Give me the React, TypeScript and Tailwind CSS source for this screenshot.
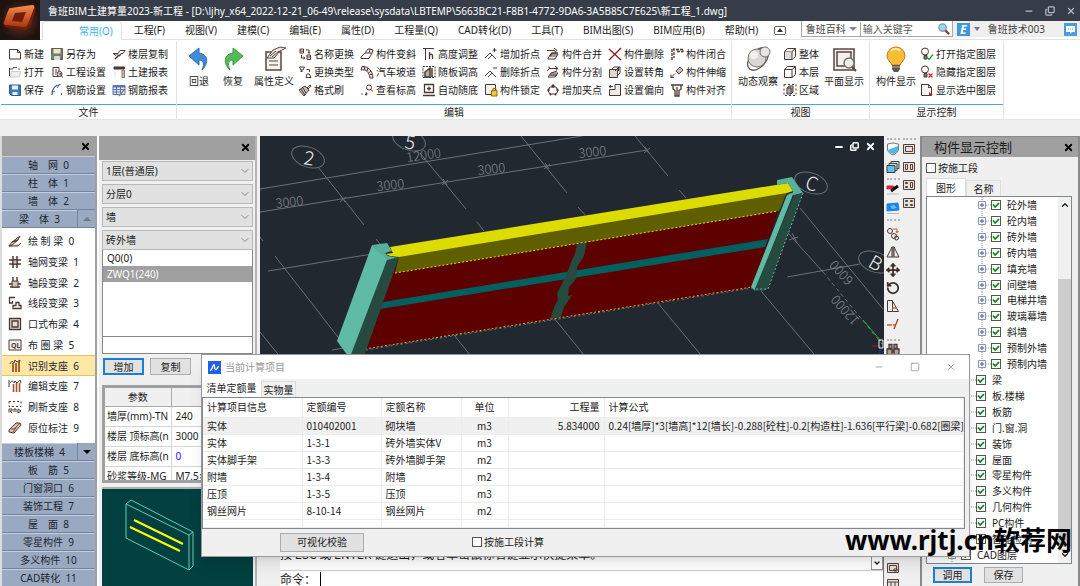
import React, { useState } from 'react';
import { ChevronDown, ChevronUp, Move, RotateCw, X, Minus, Square, Copy } from 'lucide-react';
import clsx from 'clsx';

interface Tool {
  label: string;
  icon: React.ReactNode;
}

interface QuantityRow {
  info: string;
  code: string;
  name: string;
  unit: string;
  amount?: string;
  formula?: string;
}

interface TreeNode {
  label: string;
  level: 1 | 2 | 3;
}

const Glyph = ({ children }: { children: React.ReactNode }) => (
  <svg viewBox="0 0 14 14" className="h-[14px] w-[14px] shrink-0" fill="none" stroke="#4b3833" strokeWidth="1">
    {children}
  </svg>
);

const fileTools: Tool[][] = [
  [
    { label: '新建', icon: <Glyph><path d="M1.5 2.5h8l3 3v6.500h-11z" fill="#fafafa" /><path d="M9.500 2.500v3h3" /></Glyph> },
    { label: '打开', icon: <Glyph><path d="M1.500 3v8" /><path d="M2 4h3V2.500h4M11 3v2" stroke="#6d5a55" /><path d="M3.500 6.500h9L11.500 12h-9z" fill="#eee" stroke="#ccc" /></Glyph> },
    { label: '保存', icon: <Glyph><path d="M1.500 2h11v10.500h-9l-2-2z" fill="#3f78b4" stroke="#2b5f97" /><path d="M4 2.500h6v4H4zM4.500 9h5v3h-5z" fill="#e8f1fa" stroke="none" /></Glyph> },
  ],
  [
    { label: '另存为', icon: <Glyph><path d="M1.500 1.500h11v11h-11z" fill="#777a74" stroke="#5c5f5a" /><path d="M3.500 2h7v4.500h-7z" fill="#eee9b4" stroke="none" /><path d="M4 9h6v4H4z" fill="#d8d8d8" stroke="none" /><path d="M1 7l4 2-4 2z" fill="#4aa53c" stroke="none" /></Glyph> },
    { label: '工程设置', icon: <Glyph><path d="M3 2.500h6v9H3zM5 5h2M5 7h2M5 9h1" /><circle cx="9.500" cy="9" r="2.500" fill="#ddd" /><path d="M10 8l2.500 4.500M9 9h1" /></Glyph> },
    { label: '钢筋设置', icon: <Glyph><path d="M2 12C2 6 5 2 10.500 1.500" stroke="#35598f" strokeWidth="1.200" /><path d="M3 9l2-1M9 2l-2 3" stroke="#777" /><path d="M11 10h1v2h-1z" fill="#35598f" stroke="none" /></Glyph> },
  ],
  [
    { label: '楼层复制', icon: <Glyph><path d="M1 6.500h5l2-3h5l-2 3h-2M1 6.500l3 2 2-2" /><path d="M3 12l4-4M7 9l2-2" strokeWidth="1.500" /></Glyph> },
    { label: '土建报表', icon: <Glyph><path d="M2 2h10.500v2H2z" fill="#4b3833" /><path d="M10 5h2.500v7.500H10z" fill="#c8b8a8" stroke="#8b7a70" /><path d="M3 5v7" stroke="#ddd" /></Glyph> },
    { label: '钢筋报表', icon: <Glyph><path d="M1 2.500h12v9H1z" fill="#e8eef8" stroke="#5b75a8" /><path d="M1 3.500h12" stroke="#5b75a8" strokeWidth="2" /><path d="M1 6.500h12M1 9h8M4.500 3v8M8.500 3v8" stroke="#5b75a8" /><path d="M7 13l5-6" stroke="#8d8177" strokeWidth="1.500" /></Glyph> },
  ],
];

const editTools: Tool[][] = [
  [
    { label: '名称更换', icon: <Glyph><path d="M2 2h3.500v4H2zM2 4h3M9 8h3.500v4.500H9zM9 10h3" /><path d="M8 3h3v3M3.500 8v3h3" /><path d="M10 5l1 1.500L12 5M5.500 10L7 11l-1.500 1" /></Glyph> },
    { label: '更换类型', icon: <Glyph><path d="M1.500 2h5L5 5H3zM9 9h2.500l1.500 3.500H8z" /><path d="M8.500 4.500h3V7" /><path d="M3.500 5.500V7" strokeWidth="2" /></Glyph> },
    { label: '格式刷', icon: <Glyph><path d="M1 7l6-4 4 4-5 6z" fill="#c9bfba" /><path d="M3 6l4 6M5 5l3 5M9 5l3-3 1 1-3 3" /></Glyph> },
  ],
  [
    { label: '构件变斜', icon: <Glyph><path d="M1 10l4-4h7l-3 5.500H1zM5 6l3-4h2l-1 4M10 2l3 1-1 3" /></Glyph> },
    { label: '汽车坡道', icon: <Glyph><path d="M1 5c5-1 8 2 9 8h3C13 6 8 1 2 1.500z" fill="#eee1d8" /><path d="M4 1.500l1 3.500M8 3L7 6M11 6L8.500 8M12.500 9.500H10" /></Glyph> },
    { label: '查看标高', icon: <Glyph><path d="M1.500 11h1M5 11.500h1.500v-2" strokeWidth="1.500" /><circle cx="9" cy="4.500" r="2.500" /><path d="M11 6.500l2 2" stroke="#c98744" strokeWidth="1.500" /></Glyph> },
  ],
  [
    { label: '高度调整', icon: <Glyph><path d="M1 1.500h11M3.500 2v11" /><path d="M7.500 5v7M7.500 8.500c1-2 3-1.500 3 .5v3" strokeWidth="1.300" /></Glyph> },
    { label: '随板调高', icon: <Glyph><path d="M1 1.500h12v11H1z" strokeDasharray="2 1" /><path d="M3 12V7l5-4v9zM10 3v9" fill="#b9ada8" strokeWidth="1.500" /></Glyph> },
    { label: '自动随底', icon: <Glyph><path d="M2.500 1.500h9v8h-9zM1 12.500h12M7 3.500v4M5 5.500h4" strokeWidth="1.300" /></Glyph> },
  ],
  [
    { label: '增加折点', icon: <Glyph><path d="M1 11l5-5 3 3M4 12l4-4 4 4M10.500 1v4M8.500 3h4" /></Glyph> },
    { label: '删除折点', icon: <Glyph><path d="M1 11l5-5 3 3M4 12l4-4 4 4M9 3h4" /></Glyph> },
    { label: '构件锁定', icon: <Glyph><path d="M1.500 1.500h10v10h-10z" fill="#f4f1ef" /><path d="M7.500 7.500h5.500V13H7.500z" fill="#f2c83a" stroke="#8c6a10" /><path d="M9 7V5.500h3V7" stroke="#8c6a10" /></Glyph> },
  ],
  [
    { label: '构件合并', icon: <Glyph><path d="M1 3.500h8M2 11l3-4h7l-3 5H2zM4 9h7M8 1l3 2.500-3 2" /><path d="M4 9l2-3h6" strokeWidth="1.400" /></Glyph> },
    { label: '构件分割', icon: <Glyph><path d="M3 3.500h9M1 6l3-3-2-1M2 12l3-4h7l-3 4zM9 1l3 2.500L10 5M5 8L11 6" /><path d="M4 10h7" strokeWidth="1.400" /></Glyph> },
    { label: '增加夹点', icon: <Glyph><path d="M4 4h6l2 4-2 3H4L2 8z" /><path d="M6 2h2v2H6zM2 6h1v2H2zM11 6h1v2h-1zM4 11h1v1H4zM9 11h1v1H9z" fill="#4b3833" /></Glyph> },
  ],
  [
    { label: '构件删除', icon: <Glyph><path d="M1 2l12 11M13 1L1 13" stroke="#8e1f28" strokeWidth="1.400" /></Glyph> },
    { label: '设置转角', icon: <Glyph><path d="M1.500 4.500h8v8h-8z" fill="#ddd8d4" /><path d="M4 4l2-2h6v6l-2 2M7 6l4-4" /><path d="M10.500 2v4" stroke="#3c3c3c" /></Glyph> },
    { label: '设置偏向', icon: <Glyph><path d="M7 1.500h5.500v11h-11v-6H7z" fill="#eeeae7" /><path d="M1 3.500h4M3 2L1 3.500 3 5" /></Glyph> },
  ],
  [
    { label: '构件闭合', icon: <Glyph><path d="M2 13V2h2v9M6 2.500h7v2H6" strokeDasharray="3 1" strokeWidth="1.300" /></Glyph> },
    { label: '构件伸缩', icon: <Glyph><path d="M6 6l4-4 3 3-4 4z" fill="#cdc4bf" /><path d="M1 12.500l4-4M1 9.500v3h3" /></Glyph> },
    { label: '构件对齐', icon: <Glyph><path d="M1 2h12M3 2v4l2 1.500V13h4V7.500L11 6V2M7 4v9" strokeWidth="1.300" /></Glyph> },
  ],
];

const viewTools: Tool[] = [
  { label: '整体', icon: <Glyph><path d="M1.500 4.500h7.500v8H1.500z" fill="#ddd" /><path d="M1.500 4.500l3-3h8L9 4.500M12.500 1.500v8l-3.500 3" fill="#f5f5f5" /></Glyph> },
  { label: '本层', icon: <Glyph><path d="M1.500 4.500h7.500v8H1.500z" /><path d="M1.500 4.500l3-3h8L9 4.500M12.500 1.500v8l-3.500 3" /></Glyph> },
  { label: '区域', icon: <Glyph><path d="M1 1.500h12v11H1z" strokeDasharray="2 2" /><path d="M4 5h4v6H4zM4 5l2-2h4v6l-2 2" fill="#aaa" /></Glyph> },
];

const layerTools: Tool[] = [
  { label: '打开指定图层', icon: <Glyph><circle cx="5" cy="4.500" r="3.500" fill="#fafafa" /><path d="M4 8.500h3v3.500H4z" fill="#777" /><path d="M7 10.500l2 2 4-5" stroke="#27a33a" strokeWidth="1.400" /></Glyph> },
  { label: '隐藏指定图层', icon: <Glyph><circle cx="5" cy="4.500" r="3.500" fill="#fafafa" /><path d="M4 8.500h3v3.500H4z" fill="#777" /><path d="M8.500 8.500l4 4M12.500 8.500l-4 4" stroke="#c62c2c" strokeWidth="1.300" /></Glyph> },
  { label: '显示选中图层', icon: <Glyph><path d="M1.500 1.500h7l3 3v8h-10z" fill="#f6f6f6" /><path d="M8.500 1.500v3h3" /><path d="M9 9l4 3-4 1z" fill="#b23" stroke="none" /></Glyph> },
];

const menus = ['工程(F)', '视图(V)', '建模(C)', '编辑(E)', '属性(D)', '工程量(Q)', 'CAD转化(D)', '工具(T)', 'BIM出图(S)', 'BIM应用(B)', '帮助(H)'];

const beamTools: Tool[] = [
  { label: '绘 制 梁  0', icon: <Glyph><path d="M1 12l3-4 8-6-2 4-6 5zM1 12h9l3-3M4 8l5-1M6 7l4-1" fill="#cfc5bd" /></Glyph> },
  { label: '轴网变梁  1', icon: <Glyph><path d="M1 5h12M1 9h12M5 1v12M9 1v12" strokeWidth="1.500" /><path d="M5 5h4v4H5z" fill="#cfc5bd" /></Glyph> },
  { label: '轴段变梁  2', icon: <Glyph><path d="M1 8h12M5 1v5M9 1v5M2 11h10" strokeWidth="1.400" /><path d="M4 5h6v6H4z" fill="#cfc5bd" /></Glyph> },
  { label: '线段变梁  3', icon: <Glyph><path d="M1 1.500h6M1.500 1v6h3V5M5 12.500h8v-3h-2v-3H8v3H5z" strokeWidth="1.300" /></Glyph> },
  { label: '口式布梁  4', icon: <Glyph><path d="M1.500 1.500h11v11h-11zM4 4h6v6H4z" fill="#e2dbd6" strokeWidth="1.300" /></Glyph> },
  { label: '布 圈 梁  5', icon: <Glyph><path d="M1 2h12v10H1z" fill="#f4f0ed" /><text x="3" y="10" fontSize="7" fontWeight="700" fill="#4b3833" stroke="none">QL</text></Glyph> },
  { label: '识别支座  6', icon: <Glyph><path d="M2 5c1-3 3-3 4-1l1-3 2 2 3-2-1 4" /><path d="M5 4v9M8 4v9M11 2v11" stroke="#a4532c" strokeWidth="1.800" /></Glyph> },
  { label: '编辑支座  7', icon: <Glyph><path d="M1 1v7M2 4c2-3 3-2 4 0l1-2 2 2 3-3 1 3" /><path d="M5.500 5v8M8.500 4v9M11.500 4v9" stroke="#a4532c" strokeWidth="1.600" /></Glyph> },
  { label: '刷新支座  8', icon: <Glyph><path d="M1 1.500h12v5H1z" strokeDasharray="2 2" /><path d="M1 12.500V9h3v2H2l2 2M6 12V9h2v3M10 9v4l3-2z" /></Glyph> },
  { label: '原位标注  9', icon: <Glyph><path d="M1 9l7-7h4l1 2-7 8-5-1z" fill="#d9c7ba" /><path d="M3 8h3l6-6M5 11L9 5" stroke="#8b4a2b" /></Glyph> },
];

const sideCategories = ['板　筋  5', '门窗洞口  6', '装饰工程  7', '屋　面  8', '零星构件  9', '多义构件  10', 'CAD转化  11'];

const quantityRows: QuantityRow[] = [
  { info: '实体', code: '010402001', name: '砌块墙', unit: 'm3', amount: '5.834000', formula: '0.24[墙厚]*3[墙高]*12[墙长]-0.288[砼柱]-0.2[构造柱]-1.636[平行梁]-0.682[圈梁]' },
  { info: '实体', code: '1-3-1', name: '砖外墙实体V', unit: 'm3' },
  { info: '实体脚手架', code: '1-3-3', name: '砖外墙脚手架', unit: 'm2' },
  { info: '附墙', code: '1-3-4', name: '附墙', unit: 'm2' },
  { info: '压顶', code: '1-3-5', name: '压顶', unit: 'm3' },
  { info: '钢丝网片', code: '8-10-14', name: '钢丝网片', unit: 'm2' },
];

const treeNodes: TreeNode[] = [
  ...['砼外墙', '砼内墙', '砖外墙', '砖内墙', '填充墙', '间壁墙', '电梯井墙', '玻璃幕墙', '斜墙', '预制外墙', '预制内墙'].map(
    (label): TreeNode => ({ label, level: 3 })
  ),
  ...['梁', '板.楼梯', '板筋', '门.窗.洞', '装饰', '屋面', '零星构件', '多义构件', '几何构件', 'PC构件', '智能检测'].map(
    (label): TreeNode => ({ label, level: 2 })
  ),
  { label: 'CAD图层', level: 1 },
];

const properties = [
  ['墙厚(mm)-TN', '240'],
  ['楼层 顶标高(n', '3000'],
  ['楼层 底标高(n', '0'],
  ['砂浆等级-MG', 'M7.5≈'],
];

const ToolColumn = ({ tools }: { tools: Tool[] }) => (
  <div className="flex flex-col">
    {tools.map((tool) => (
      <button key={tool.label} className="flex h-[18px] items-center gap-[2px] whitespace-nowrap">
        {tool.icon}
        {tool.label}
      </button>
    ))}
  </div>
);

const BigTool = ({ label, children }: { label: string; children: React.ReactNode }) => (
  <button className="flex flex-col items-center gap-[2px] pt-px whitespace-nowrap">
    <svg viewBox="0 0 26 26" className="h-[26px] w-[26px]" fill="none">
      {children}
    </svg>
    <span className="leading-[14px]">{label}</span>
  </button>
);

const RibbonGroup = ({ title, className, children }: { title: string; className?: string; children: React.ReactNode }) => (
  <section className={clsx('flex flex-col border-r border-[#e2e2e2]', className)}>
    <div className="flex h-16 items-start border-b border-[#4ba3f5] pt-1">{children}</div>
    <h2 className="text-center leading-[14px]">{title}</h2>
  </section>
);

const TickBox = ({ label, checked = false, className }: { label: string; checked?: boolean; className?: string }) => (
  <label className={clsx('flex items-center whitespace-nowrap', className)}>
    <span className="relative h-[10px] w-[10px] shrink-0">
      <input type="checkbox" defaultChecked={checked} className="peer block h-[10px] w-[10px] appearance-none border border-[#555] bg-white" />
      <svg viewBox="0 0 10 10" className="pointer-events-none absolute inset-0 hidden peer-checked:block" fill="none" stroke="#0b8a1a" strokeWidth="1.800">
        <path d="M2 4.500l2.200 2.500L8 3" />
      </svg>
    </span>
    {label}
  </label>
);

const DropDown = ({ label, value }: { label: string; value: string }) => (
  <div className="relative">
    <select aria-label={label} className="block h-5 w-full appearance-none border border-[#b9b9b9] bg-[#e1e1e1] pl-[3px]">
      <option>{value}</option>
    </select>
    <ChevronDown className="pointer-events-none absolute top-1 right-[2px] h-3 w-3 text-[#666]" strokeWidth={1.5} />
  </div>
);

const PanelHeader = ({ title }: { title?: string }) => (
  <header className="flex h-5 shrink-0 items-center justify-between bg-[#a0a0a0] pr-1 pl-3">
    <h2 className="text-[13px]">{title}</h2>
    <button aria-label="关闭面板">
      <X className="h-[11px] w-[11px] text-black" strokeWidth={4} />
    </button>
  </header>
);

const AppLogo = () => (
  <svg viewBox="0 0 40 40" className="h-10 w-10 shrink-0">
    <defs>
      <radialGradient id="ember">
        <stop offset="0" stopColor="#6b3520" />
        <stop offset="1" stopColor="#20120f" />
      </radialGradient>
      <linearGradient id="metal" x2="0" y2="1">
        <stop offset="0" stopColor="#f58a50" />
        <stop offset="1" stopColor="#a8360f" />
      </linearGradient>
    </defs>
    <path d="M0 0h40v40H0z" fill="url(#ember)" />
    <path d="M12 9l20-4 4 3-5 17-5 5-21-3-1-3z" fill="#711d08" />
    <path d="M11 8l21-3c2 0 3 1 2 3l-6 16c-1 2-2 3-4 3L6 25c-2 0-3-1-2-3l4-11c1-2 1-3 3-3zm4 5l-3 8 10 1 4-10z" fill="url(#metal)" fillRule="evenodd" />
  </svg>
);

const TitleBar = () => (
  <header className="flex bg-white">
    <AppLogo />
    <div className="min-w-0 flex-1">
      <div className="flex h-[21px] items-center justify-between bg-[#363d48] pr-1 pl-2 text-white">
        <h1 className="truncate">鲁班BIM土建算量2023-新工程 - [D:\ljhy_x64_2022-12-21_06-49\release\sysdata\LBTEMP\5663BC21-F8B1-4772-9DA6-3A5B85C7E625\新工程_1.dwg]</h1>
        <div className="flex items-end gap-[11px] text-[#b5b9c0]">
          <button aria-label="最小化"><Minus className="h-[10px] w-[10px]" strokeWidth={3} /></button>
          <button aria-label="还原"><Copy className="h-[10px] w-[10px] -scale-y-100" strokeWidth={3} /></button>
          <button aria-label="关闭"><X className="h-[10px] w-[10px]" strokeWidth={3} /></button>
        </div>
      </div>
      <div className="flex h-[19px] justify-between border-b border-[#e2e2e2]">
        <nav className="ml-[2px] flex items-center gap-5 whitespace-nowrap">
          <button className="-mb-px h-[19px] rounded-t-sm border border-b-0 border-[#dedede] bg-white pr-2 pl-9 text-[#42b4ee]">常用(O)</button>
          <div className="-ml-2 flex items-center gap-5">
            {menus.map((menu) => (
              <button key={menu} className="h-[19px]">{menu}</button>
            ))}
          </div>
          <button aria-label="收起功能区" className="-ml-1 grid h-[9px] w-3 place-items-center rounded-xs border border-[#666]">
            <svg viewBox="0 0 6 4" className="h-1 w-[6px]"><path d="M3 0l3 4H0z" fill="#333" /></svg>
          </button>
        </nav>
        <div className="flex h-4 text-[#444]">
          <div className="flex items-center border border-t-0 border-[#a8a8a8] bg-white pl-1">
            <select aria-label="搜索范围" className="appearance-none"><option>鲁班百科</option></select>
            <svg viewBox="0 0 12 12" className="mx-px h-3 w-3"><path d="M2 4h8l-4 4z" fill="#888" /></svg>
            <input aria-label="搜索关键字" placeholder="输入关键字" className="h-[14px] w-[77px] border-l border-[#aaa] pl-[2px] placeholder:text-[#555]" />
            <svg viewBox="0 0 14 14" className="mr-[2px] h-[13px] w-[13px]" fill="none">
              <circle cx="6" cy="6" r="4" fill="#9fd6ef" stroke="#8ba0ac" strokeWidth="1.500" />
              <path d="M9 9l4 4" stroke="#7a4a3a" strokeWidth="2.500" />
            </svg>
          </div>
          <div className="flex items-center gap-[3px] bg-[#efefef] pr-[3px] pl-1">
            <svg viewBox="0 0 13 13" className="h-[13px] w-[13px]">
              <path d="M0 0h13v13H0z" fill="#3f97de" />
              <text x="3" y="11" fontSize="12" fontWeight="700" fontStyle="italic" fill="#fff">E</text>
            </svg>
            <svg viewBox="0 0 8 8" className="h-2 w-2"><path d="M1 2h6L4 6z" fill="#777" /></svg>
            <span className="mr-4 ml-1">鲁班技术003</span>
            <svg viewBox="0 0 13 13" className="h-[13px] w-[13px]"><path d="M0 0h13v13H0z" fill="#4b9ddd" /><path d="M2 3h9v6H8l-2 2V9H2z" fill="#fff" /><path d="M4 6h1M6 6h1M8 6h1" stroke="#4b9ddd" /></svg>
          </div>
        </div>
      </div>
    </div>
  </header>
);

const Ribbon = () => (
  <div className="flex border-b border-[#e5e5e5] bg-white pt-px pl-px">
    <RibbonGroup title="文件" className="w-[176px]">
      <div className="flex gap-[6px] pl-[7px]">
        {fileTools.map((tools) => (
          <ToolColumn key={tools[0].label} tools={tools} />
        ))}
      </div>
    </RibbonGroup>
    <RibbonGroup title="编辑" className="w-[555px]">
      <div className="flex gap-2 pr-1 pl-[9px]">
        <BigTool label="回退">
          <path d="M3 10l10-8v5c8 1 11 9 3 17 3-7 1-10-3-10v5z" fill="#3f8bd6" stroke="#2e6fb4" />
        </BigTool>
        <BigTool label="恢复">
          <path d="M23 10L13 2v5C5 8 2 16 10 24c-3-7-1-10 3-10v5z" fill="#55bb58" stroke="#3a9b3f" />
        </BigTool>
        <BigTool label="属性定义">
          <path d="M5 6h15v18H5z" fill="#f5f2f0" stroke="#5a4640" strokeWidth="1.500" />
          <path d="M8 15h9M8 19h9M6 12l6-8 7-3 6 1-6 3-6 7z" stroke="#5a4640" fill="#eee5df" />
          <path d="M9 10l6-5M11 11l7-6" stroke="#5a4640" />
        </BigTool>
      </div>
      <div className="flex gap-[6px]">
        {editTools.map((tools) => (
          <ToolColumn key={tools[0].label} tools={tools} />
        ))}
      </div>
    </RibbonGroup>
    <RibbonGroup title="视图" className="w-[138px]">
      <div className="flex gap-[5px] pl-[6px]">
        <BigTool label="动态观察">
          <ellipse cx="13" cy="13" rx="13" ry="8" transform="rotate(-50 13 13)" stroke="#5f5551" strokeWidth="1.300" />
          <circle cx="12" cy="12" r="9" fill="#d6d6d4" stroke="#77706c" />
          <circle cx="9" cy="9" r="4" fill="#f1f1f0" />
          <circle cx="20" cy="6" r="5" fill="#e6e6e5" stroke="#77706c" />
        </BigTool>
        <ToolColumn tools={viewTools} />
        <BigTool label="平面显示">
          <path d="M3 3h20v21H3zM6 6h14v14H6z" fill="#f4f1ef" stroke="#594640" strokeWidth="1.500" />
          <circle cx="18" cy="17" r="5" fill="#eee" stroke="#7b706b" strokeWidth="1.500" />
          <path d="M21 21l4 4" stroke="#594640" strokeWidth="2" />
        </BigTool>
      </div>
    </RibbonGroup>
    <RibbonGroup title="显示控制" className="w-[134px]">
      <div className="flex gap-1 pl-[6px]">
        <BigTool label="构件显示">
          <path d="M13 1a9 9 0 0 0-9 9c0 4 4 6 5 9h8c1-3 5-5 5-9a9 9 0 0 0-9-9z" fill="#f9bd35" stroke="#b77e19" />
          <path d="M8 5c2-3 7-3 9 0" stroke="#fde7a4" strokeWidth="2" />
          <path d="M9 19h8v4l-2 3h-4l-2-3z" fill="#60504a" />
          <path d="M9 21h8" stroke="#bbb" />
        </BigTool>
        <ToolColumn tools={layerTools} />
      </div>
    </RibbonGroup>
  </div>
);

const categoryStyle = 'h-[18px] w-full border-t border-b border-t-[#c3cede] border-b-[#74839c] bg-[#9aa9c2] leading-4 whitespace-pre';

const SideMenu = () => {
  const [active, setActive] = useState(6);

  return (
    <aside className="flex w-[97px] shrink-0 flex-col border-x-2 border-x-[#dcdcdc] border-r-[#a0a0a0] bg-white">
      <PanelHeader />
      <nav className="flex flex-col text-[#20242c]">
        <button className={categoryStyle}>{'轴　网  0'}</button>
        <button className={categoryStyle}>{'柱　体  1'}</button>
        <button className={categoryStyle}>{'墙　体  2'}</button>
        <div className="flex">
          <button className={categoryStyle}>{'梁　体  3'}</button>
          <button aria-label="收起梁体" className="grid w-[18px] shrink-0 place-items-center border-b border-l border-[#74839c] bg-[#9aa9c2]">
            <svg viewBox="0 0 8 6" className="h-[6px] w-2"><path d="M4 1l4 4H0z" fill="#77777c" /></svg>
          </button>
        </div>
        <ul className="grid h-[215px] auto-rows-fr pt-[3px] pb-[5px]">
          {beamTools.map((tool, i) => (
            <li key={tool.label} className="flex">
              <button
                onClick={() => setActive(i)}
                className={clsx('flex w-full items-center gap-[6px] border-y pl-[6px] whitespace-pre', i === active ? 'border-[#e5c365] bg-[#ffe8a6]' : 'border-transparent')}
              >
                {tool.icon}
                {tool.label}
              </button>
            </li>
          ))}
        </ul>
        <div className="flex">
          <button className={categoryStyle}>楼板楼梯  4</button>
          <button aria-label="展开楼板楼梯" className="grid w-[18px] shrink-0 place-items-center border-b border-l border-[#74839c] bg-[#9aa9c2]">
            <svg viewBox="0 0 8 6" className="h-[6px] w-2"><path d="M4 5L0 1h8z" fill="#000" /></svg>
          </button>
        </div>
        {sideCategories.map((name) => (
          <button key={name} className={categoryStyle}>{name}</button>
        ))}
      </nav>
    </aside>
  );
};

const ComponentPanel = () => (
  <aside className="flex w-[160px] shrink-0 flex-col border-r-2 border-l-2 border-r-[#b4b4b4] border-l-[#fafafa] bg-[#f0f0f0]">
    <div className="bg-[#a0a0a0] pt-px pb-[3px]"><PanelHeader /></div>
    <div className="flex flex-1 flex-col pr-[2px] pl-[3px]">
      <div className="flex flex-col gap-[3px] pt-px">
        <DropDown label="楼层" value="1层(普通层)" />
        <DropDown label="分层" value="分层0" />
        <DropDown label="构件大类" value="墙" />
        <DropDown label="构件小类" value="砖外墙" />
      </div>
      <div className="-mt-px border border-[#888] bg-white">
        <ul className="h-[86px]">
          <li><button className="block h-4 w-full pl-1 text-left leading-4">Q0(0)</button></li>
          <li><button className="block h-4 w-full bg-[#a0a0a0] pl-1 text-left leading-4 text-white">ZWQ1(240)</button></li>
        </ul>
        <input aria-label="构件名称" className="block h-[17px] w-full border-t border-[#888]" />
      </div>
      <div className="flex gap-[6px] pt-1 pb-[6px] pl-px">
        <button className="h-[17px] w-[41px] border-2 border-[#1b7fd4] bg-[#e1e1e1] leading-3">增加</button>
        <button className="h-[17px] w-[41px] border border-[#adadad] bg-[#e1e1e1] leading-3">复制</button>
      </div>
      <div className="mt-1 h-[98px] overflow-hidden border-[3px] border-[#a0a0a0] bg-white">
        <table className="w-full table-fixed border-collapse">
          <thead>
            <tr className="h-[18px] bg-[#f0f0f0]">
              <th className="w-[66px] border-r border-b border-[#aaa] font-normal">参数</th>
              <th className="border-b border-[#aaa] font-normal">值</th>
            </tr>
          </thead>
          <tbody>
            {properties.map(([name, value]) => (
              <tr key={name} className="h-5">
                <td className="overflow-hidden border-r border-b border-[#d5d5d5] pl-[2px] whitespace-nowrap">{name}</td>
                <td className={clsx('border-b border-[#d5d5d5] pl-1', value === '0' && 'text-[#2222ff]')}>{value}</td>
              </tr>
            ))}
          </tbody>
        </table>
      </div>
      <div className="mt-1 flex-1 border-t-2 border-[#b0b0b0]">
        <svg viewBox="102 487 151 98" preserveAspectRatio="xMinYMin slice" className="h-[98px] w-full bg-[#004040]" fill="none">
          <g stroke="#64cdb4">
            <path d="M126 502l63 31v35l-63-32zM126 502l5-4 62 32v34l-4 4M189 533l4-3" />
          </g>
          <path d="M134 518l49 24M130 525l50 24" stroke="#ff0" strokeWidth="2" />
        </svg>
      </div>
    </div>
  </aside>
);

const ModelView = () => (
  <div className="relative min-h-0 flex-1 bg-[#212830]">
    <svg viewBox="260 136 624 404" preserveAspectRatio="xMinYMin slice" className="h-full w-full font-['Noto_Sans_CJK_SC',sans-serif] font-light" fill="none">
      <g stroke="#6c7075" strokeWidth="1">
        <path d="M260 189L582 136M260 212l387-62" />
        <path d="M318 167l46 58M420 153l46 56M521 136l46 57M635 136l33 40" />
        <path d="M477 222l7 9M376 239l8 10M578 207l7 8M679 190l7 8M260 237l3 4" />
        <path d="M275 256l80 103M268 271l104-17M260 332l22 27M332 350l18-3" />
        <path d="M454 335l20 25M554 318l34 42M657 302l48 58M761 291l58 69" />
        <path d="M800 208l83 101M788 233l35 39M787 277l73-13" />
        <path d="M823 272l59 72" strokeDasharray="4 3" />
        <path d="M792 233l5 10M789 240l9-3M340 202l6-5M341 196l4 6M442 185l6-5M443 179l4 6M544 169l6-5M545 163l4 6M644 153l6-5M645 147l4 6" />
        <ellipse cx="308" cy="157" rx="17" ry="10" transform="rotate(20 308 157)" />
        <ellipse cx="409" cy="140" rx="17" ry="10" transform="rotate(20 409 140)" />
        <ellipse cx="811" cy="183" rx="17" ry="10" transform="rotate(20 811 183)" />
        <ellipse cx="875" cy="262" rx="17" ry="10" transform="rotate(20 875 262)" />
      </g>
      <g fill="#85898e" fontSize="13">
        <text x="276" y="208" transform="rotate(-6 276 208)">3000</text>
        <text x="377" y="191" transform="rotate(-6 377 191)">3000</text>
        <text x="478" y="175" transform="rotate(-6 478 175)">3000</text>
        <text x="579" y="158" transform="rotate(-6 579 158)">3000</text>
        <text x="407" y="162" transform="rotate(-8 407 162)">12000</text>
        <text x="854" y="280" transform="rotate(228 854 280)">6000</text>
        <text x="860" y="320" transform="rotate(228 860 320)">12000</text>
      </g>
      <g fill="#eee" fontSize="19">
        <text x="303" y="164" transform="rotate(10 303 164)">2</text>
        <text x="404" y="148" transform="rotate(10 404 148)">5</text>
        <text x="804" y="188" transform="rotate(20 804 188)">C</text>
        <text x="867" y="266" transform="rotate(30 867 266)">B</text>
      </g>
      <path d="M399 256L787 192 778 212 752 288 365 349 390 270z" fill="#5c0000" />
      <path d="M399 256L787 192 779 211 395 273z" fill="#5f5f00" />
      <path d="M383 302L768 239 765 247 380 309z" fill="#005f5f" />
      <path d="M577 244l10-2-3 14-7 11-1 12-7 8-1 9 4-1-8 12-3 10-11 2 5-14 3-5-1-7 7-13 5-12 2-6 4-8z" fill="#264a40" />
      <path d="M390 247L788 183l5 8-6 2L399 257l-9-1-4-2 7-1z" fill="#dcdc00" />
      <path d="M395 273L778 211" stroke="#dcdc00" strokeDasharray="2 2" />
      <path d="M365 349L752 287" stroke="#dca02a" strokeDasharray="2 2" />
      <path d="M366 350L752 288" stroke="#3f8a80" strokeDasharray="2 3" />
      <path d="M777 180l15-3 11 16-10 2 0-4-5-8-11 2z" fill="#58b09b" />
      <path d="M787 195l7-3-39 99-4-4z" fill="#5fbba5" />
      <path d="M788 194l15-2-9 3z" fill="#58b09b" />
      <path d="M794 195l9-2-35 95-4 3h-10z" fill="#264a40" />
      <path d="M803 193l-35 96h-14" stroke="#5fbba5" strokeDasharray="2 2" />
      <path d="M372 245l15-2 5 8-7 2 3 3 11 2-12 3z" fill="#58b09b" />
      <path d="M372 245l15 15-31 107-19-26z" fill="#5fbba5" />
      <path d="M387 260l12-3-37 105-12-5z" fill="#264a40" />
      <path d="M863 320l18 21" stroke="#0fbf1f" />
      <path d="M872 346h8" stroke="#b01818" />
      <path d="M880 346v10" stroke="#2222ee" />
      <path d="M879 340h4v8h-4z" stroke="#eee" />
    </svg>
    <div className="absolute top-[5px] right-2 flex items-center gap-[6px] text-white">
      <button aria-label="最小化视图"><Minus className="h-[10px] w-[10px]" strokeWidth={5} /></button>
      <button aria-label="还原视图"><Copy className="h-[9px] w-[9px] -scale-y-100" strokeWidth={4} /></button>
      <button aria-label="关闭视图"><X className="h-[11px] w-[11px]" strokeWidth={4} /></button>
    </div>
  </div>
);

const CommandLine = () => (
  <div className="flex h-[46px] shrink-0 border-r border-[#777] bg-white font-['Noto_Sans_CJK_SC',sans-serif] text-[12px]">
    <div className="w-5 shrink-0 bg-[#f0f0f0]" />
    <div className="min-w-0 flex-1">
      <div className="flex h-[31px] items-end justify-between border-b border-[#ccc]">
        <p className="mb-2 leading-4">按 ESC 或 ENTER 键退出，或者单击鼠标右键显示快捷菜单。</p>
        <button aria-label="向下滚动" className="grid h-[14px] w-3 place-items-center border border-[#999] bg-white">
          <ChevronDown className="h-2 w-2" strokeWidth={4} />
        </button>
      </div>
      <label className="flex items-center pt-px">
        命令：
        <input className="ml-1 h-[14px] flex-1 border-l border-black" />
      </label>
    </div>
  </div>
);

const Grip = () => <div className="h-1 w-[13px] border-t-2 border-dotted border-[#b5b5b5]" />;

const PaneIcon = ({ d }: { d: string }) => (
  <svg viewBox="0 0 14 14" className="h-[14px] w-[14px]" fill="#e7dfda" stroke="#55403a" strokeWidth="1">
    <path d="M1.500 2.500h11v9h-11z" />
    <path d={d} />
  </svg>
);

const modifyIcons: Tool[] = [
  { label: '复制对象', icon: <Glyph><circle cx="4" cy="4" r="2.500" /><circle cx="8" cy="9" r="2.500" /><circle cx="10.500" cy="11" r="2" /><path d="M7 2h4v3M10 4l1 2 1.500-2" stroke="#c4602a" /></Glyph> },
  { label: '镜像', icon: <Glyph><path d="M6 2v10H1zM8 2v10h5zM7 1v12" fill="#eee" /></Glyph> },
  { label: '移动', icon: <Move className="h-[14px] w-[14px] text-[#3f2a24]" strokeWidth={3} /> },
  { label: '旋转', icon: <RotateCw className="h-[14px] w-[14px] -scale-x-100 text-[#3f2a24]" strokeWidth={3} /> },
  { label: '拉伸', icon: <Glyph><path d="M1.500 1.500v11h5v-11zM7 3l5.500 9.500H7" /><path d="M6 9h4" stroke="#c4602a" strokeWidth="1.500" /></Glyph> },
  { label: '延伸', icon: <Glyph><path d="M1 8h5M7 8h2" stroke="#c4602a" strokeWidth="1.300" /><path d="M8 12l4-10" stroke="#a0402a" strokeWidth="1.300" /></Glyph> },
];

const SideToolbars = () => (
  <div className="flex w-[36px] shrink-0 items-start gap-[2px] bg-[#f0f0f0] pt-[2px] pl-[2px] text-[#4b3833]">
    <div className="flex flex-col items-center">
      <Grip />
      <div className="flex flex-col items-center gap-1">
        <button aria-label="着色"><Glyph><path d="M1.500 2l5.500-1 5.500 1v5c0 3-3 5-5.500 6-2.500-1-5.500-3-5.500-6z" fill="#f6f6f6" stroke="#777" /><path d="M2 8l10-4v4c-1 2-3 4-5 4-3-1-4-2-5-4z" fill="#4ab9e8" stroke="none" /></Glyph></button>
        <button aria-label="图层"><Glyph><path d="M5 1.500h8v7H5z" fill="#bfe6f5" /><path d="M3 3.500h8v7H3z" fill="#bfe6f5" /><path d="M1 5.500h8v7H1z" fill="#5cc4ea" /></Glyph></button>
      </div>
      <div className="mt-1"><Grip /></div>
      <div className="flex flex-col items-center gap-[5px]">
        <button aria-label="画笔"><Glyph><path d="M1 4h6l3 2-9 1z" fill="#d9202c" stroke="#d9202c" /><path d="M12 4l-7 5" stroke="#111" strokeWidth="3" /><path d="M1 12h12" stroke="#bbb" /></Glyph></button>
        <button aria-label="三维"><Glyph><path d="M1 3l11-1 1 7-12 1z" fill="#1d83e6" stroke="#1d83e6" /><path d="M4 5l4-1 3 3-5 1z" fill="#5fc2ff" stroke="none" /><path d="M1 12.500h12" stroke="#bbb" /></Glyph></button>
      </div>
      <div className="mt-1"><Grip /></div>
      <div className="flex flex-col items-center gap-1 pt-1">
        {modifyIcons.map((tool) => (
          <button key={tool.label} aria-label={tool.label}>{tool.icon}</button>
        ))}
      </div>
      <div className="mt-2"><Grip /></div>
      <button aria-label="查找"><Glyph><path d="M3 1.500h3v4H3zM8 1.500h3v4H8zM1 6h5v7H1zM8 6h5v7H8zM6 7h2v2H6z" fill="#a99f9b" strokeWidth="1.300" /></Glyph></button>
      <div className="mt-[204px] flex flex-col gap-[2px]">
        <button aria-label="视口"><PaneIcon d="M3.500 4.500h7v5h-7zM8 8h3v2H8z" /></button>
        <button aria-label="表格"><PaneIcon d="M1 5h12M5 5v7M9 5v7" /></button>
      </div>
    </div>
    <div className="flex flex-col items-center">
      <Grip />
      <div className="flex flex-col gap-1">
        <button aria-label="单视口"><PaneIcon d="M3.500 4.500h7v5h-7z" /></button>
        <button aria-label="双视口"><PaneIcon d="M3.500 4.500h2v5h-2zM8.500 4.500h2v5h-2z" /></button>
        <button aria-label="三视口"><PaneIcon d="M3.500 4.500h2v1h-2zM3.500 8.500h2v1h-2zM8.500 4.500h2v5h-2z" /></button>
        <button aria-label="四视口"><PaneIcon d="M3.500 4.500h2v1h-2zM8.500 4.500h2v1h-2zM3.500 8.500h2v1h-2zM8.500 8.500h2v1h-2z" /></button>
      </div>
    </div>
  </div>
);

const treeIndent = {
  1: 'pl-[21px]',
  2: 'pl-9',
  3: 'pl-[51px]',
};

const DisplayPanel = () => (
  <aside className="flex w-[160px] shrink-0 flex-col border-x-2 border-t border-[#8a8a8a] bg-[#f0f0f0]">
    <PanelHeader title="构件显示控制" />
    <TickBox label="按施工段" className="h-[22px] gap-[2px] pl-1" />
    <div className="flex h-[18px] items-end pl-1">
      <button className="h-[18px] w-10 border border-b-0 border-[#ddd] bg-white">图形</button>
      <button className="h-4 w-[35px] border border-b-0 border-[#ddd]">名称</button>
    </div>
    <div className="mr-[6px] ml-1 flex border border-[#828790] bg-white">
      <ul className="grid h-[366px] min-w-0 flex-1 auto-rows-fr">
        {treeNodes.map((node) => (
          <li key={node.label} className={clsx('flex items-center', treeIndent[node.level])}>
            <svg viewBox="0 0 13 16" className="h-4 w-[13px] shrink-0" fill="none">
              <path d="M4 0v16M8 8h5" stroke="#999" strokeDasharray="1 1" />
              {node.level !== 2 && (
                <>
                  <path d="M.5 4.500h7v7h-7z" fill="#f4f4f4" stroke="#8e9aa8" />
                  <path d="M2 8h4M4 6v4" stroke="#3c5ca0" />
                </>
              )}
            </svg>
            <TickBox label={node.label} checked className="gap-[6px]" />
          </li>
        ))}
      </ul>
      <div className="flex w-[13px] flex-col items-center justify-between bg-[#f0f0f0]">
        <button aria-label="向上滚动" className="py-[3px]"><ChevronUp className="h-[10px] w-[10px]" strokeWidth={3} /></button>
        <div className="mt-[66px] w-full flex-1 bg-[#cdcdcd]" />
        <button aria-label="滚动到下方" className="py-[3px]"><ChevronDown className="h-[10px] w-[10px]" strokeWidth={3} /></button>
      </div>
    </div>
    <div className="flex gap-3 py-[3px] pl-[11px]">
      <button className="h-4 w-[39px] border-2 border-[#1b7fd4] bg-[#e1e1e1] leading-3">调用</button>
      <button className="h-4 w-[39px] border border-[#adadad] bg-[#e1e1e1] leading-3">保存</button>
    </div>
  </aside>
);

const cell = 'border-r border-b border-[#ececec] pl-1 font-normal whitespace-nowrap';

const QuantityDialog = () => (
  <div role="dialog" aria-label="当前计算项目" className="absolute top-[218px] right-[110px] left-[201px] border border-[#999] bg-[#f0f0f0] shadow-lg">
    <header className="flex h-6 items-center bg-white pr-[13px] pl-[6px] text-[#999]">
      <svg viewBox="0 0 13 13" className="mr-1 h-[13px] w-[13px]" fill="none">
        <path d="M0 0h13v13H0z" fill="#1f62e8" />
        <path d="M2 9.500c2 0 3-6 4-6s0 6 2 5 1-3 3-3" stroke="#fff" strokeWidth="1.300" />
      </svg>
      <h2 className="flex-1">当前计算项目</h2>
      <div className="flex gap-[26px]">
        <button aria-label="最小化窗口"><Minus className="h-[10px] w-[10px]" /></button>
        <button aria-label="最大化窗口"><Square className="h-[10px] w-[10px]" /></button>
        <button aria-label="关闭窗口"><X className="h-[10px] w-[10px]" /></button>
      </div>
    </header>
    <div className="flex h-[18px] items-end">
      <button className="h-[18px] w-[59px] bg-white">清单定额量</button>
      <button className="h-4 w-[35px] border border-b-0 border-[#ddd]">实物量</button>
    </div>
    <div className="mr-1 border border-[#828790] bg-white">
      <table className="w-full table-fixed border-collapse text-left font-['Noto_Sans_CJK_SC',sans-serif]">
        <thead>
          <tr className="h-[19px]">
            <th className={clsx(cell, 'w-[99px]')}>计算项目信息</th>
            <th className={clsx(cell, 'w-[79px]')}>定额编号</th>
            <th className={clsx(cell, 'w-20')}>定额名称</th>
            <th className={clsx(cell, 'w-[47px] pr-1 text-center')}>单位</th>
            <th className={clsx(cell, 'w-24 pr-1 text-right')}>工程量</th>
            <th className={cell}>计算公式</th>
          </tr>
        </thead>
        <tbody>
          {quantityRows.map((row, i) => (
            <tr key={row.code} className={clsx('h-[17px] leading-4', i === 0 && 'bg-[#f0f0f0]')}>
              <td className={cell}>{row.info}</td>
              <td className={cell}>{row.code}</td>
              <td className={cell}>{row.name}</td>
              <td className={clsx(cell, 'pr-1 text-center')}>{row.unit}</td>
              <td className={clsx(cell, 'pr-1 text-right')}>{row.amount}</td>
              <td className={cell}>{row.formula}</td>
            </tr>
          ))}
          <tr className="h-2">
            {['info', 'code', 'name', 'unit', 'amount', 'formula'].map((key) => (
              <td key={key} className={cell} />
            ))}
          </tr>
        </tbody>
      </table>
    </div>
    <div className="flex h-[27px] items-center pl-[78px]">
      <button className="mr-[108px] h-[19px] w-[84px] border border-[#adadad] bg-[#e1e1e1]">可视化校验</button>
      <TickBox label="按施工段计算" className="gap-[2px]" />
    </div>
  </div>
);

const App: React.FC = () => (
  <div className="flex h-screen flex-col overflow-hidden bg-[#f0f0f0] font-['Noto_Sans','Noto_Sans_CJK_SC',sans-serif] text-[10px] leading-[14px] text-[#1c1c1c]">
    <TitleBar />
    <Ribbon />
    <main className="relative mt-4 flex min-h-0 flex-1">
      <SideMenu />
      <ComponentPanel />
      <div className="ml-[3px] flex min-w-0 flex-1 flex-col">
        <ModelView />
        <CommandLine />
      </div>
      <SideToolbars />
      <DisplayPanel />
      <QuantityDialog />
      <p className="pointer-events-none absolute right-2 bottom-7 text-[26px] leading-9 font-bold text-black">www.rjtj.cn软荐网</p>
    </main>
  </div>
);

export default App;
